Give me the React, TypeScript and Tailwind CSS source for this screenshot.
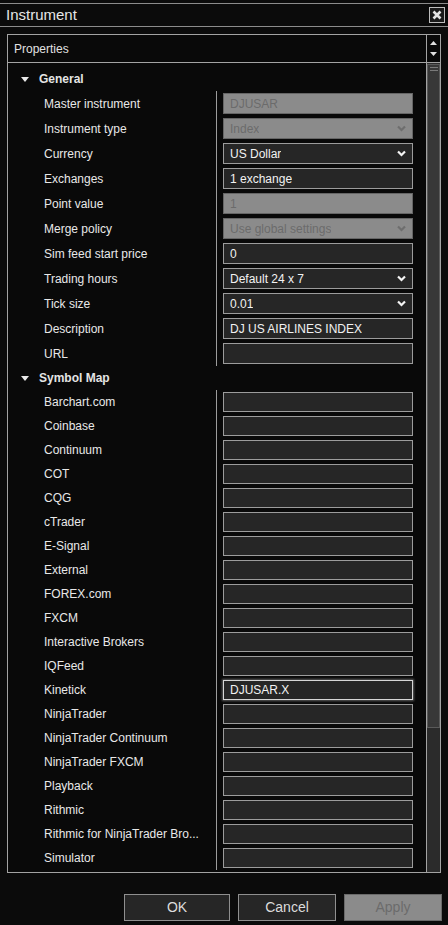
import React from 'react';

const general: { label: string; value: string; kind: 'text' | 'combo'; disabled?: boolean }[] = [
  { label: 'Master instrument', value: 'DJUSAR', kind: 'text', disabled: true },
  { label: 'Instrument type', value: 'Index', kind: 'combo', disabled: true },
  { label: 'Currency', value: 'US Dollar', kind: 'combo' },
  { label: 'Exchanges', value: '1 exchange', kind: 'text' },
  { label: 'Point value', value: '1', kind: 'text', disabled: true },
  { label: 'Merge policy', value: 'Use global settings', kind: 'combo', disabled: true },
  { label: 'Sim feed start price', value: '0', kind: 'text' },
  { label: 'Trading hours', value: 'Default 24 x 7', kind: 'combo' },
  { label: 'Tick size', value: '0.01', kind: 'combo' },
  { label: 'Description', value: 'DJ US AIRLINES INDEX', kind: 'text' },
  { label: 'URL', value: '', kind: 'text' },
];

const symbols = [
  'Barchart.com', 'Coinbase', 'Continuum', 'COT', 'CQG', 'cTrader', 'E-Signal', 'External',
  'FOREX.com', 'FXCM', 'Interactive Brokers', 'IQFeed', 'Kinetick', 'NinjaTrader',
  'NinjaTrader Continuum', 'NinjaTrader FXCM', 'Playback', 'Rithmic',
  'Rithmic for NinjaTrader Bro...', 'Simulator',
];

const font = { fontFamily: '"Liberation Sans", Arial, sans-serif' };

function Chevron({ dim }: { dim?: boolean }) {
  return (
    <svg width="9" height="7" viewBox="0 0 9 7" className="shrink-0">
      <polyline points="1,1.5 4.5,5 8,1.5" fill="none" stroke={dim ? '#6e6e6e' : '#f4f4f4'} strokeWidth="2.2" />
    </svg>
  );
}

function Field({ value, kind, disabled, focused, h }: { value: string; kind: 'text' | 'combo'; disabled?: boolean; focused?: boolean; h: string }) {
  const tone = disabled
    ? 'bg-[#8b8b8b] border-[#666] text-[#6b6b6b]'
    : focused
    ? 'bg-[#262626] border-[#d6d6d6] text-[#f2f2f2] shadow-[0_0_2px_1px_rgba(255,255,255,0.35)]'
    : 'bg-[#262626] border-[#9c9c9c] text-[#f2f2f2]';
  return (
    <div className={`${h} w-[190px] border flex items-center justify-between pl-[6px] pr-[6px] text-[12px] ${tone}`}>
      <span className="truncate">{value}</span>
      {kind === 'combo' && <Chevron dim={disabled} />}
    </div>
  );
}

function Category({ title }: { title: string }) {
  return (
    <div className="h-[24px] flex items-center pl-[13px] text-[12px] font-bold text-[#e4e4e4]">
      <svg width="8" height="5" viewBox="0 0 8 5" className="mr-[10px]">
        <polygon points="0,0 8,0 4,5" fill="#e8e8e8" />
      </svg>
      {title}
    </div>
  );
}

function Row({ label, children, h }: { label: string; children: React.ReactNode; h: string }) {
  return (
    <div className={`${h} flex items-stretch`}>
      <div className="w-[209px] shrink-0 border-r border-[#9c9c9c] pl-[36px] pr-[2px] flex items-center text-[12px] text-[#e8e8e8]">
        <span className="whitespace-nowrap">{label}</span>
      </div>
      <div className="flex-1 flex items-center pl-[6px]">{children}</div>
    </div>
  );
}

export default function App() {
  return (
    <div className="w-[448px] h-[925px] bg-[#0b0b0b] flex flex-col overflow-hidden select-none" style={font}>
      <div className="h-[3px]" />
      <div className="h-[24px] border-y border-[#8c8c8c] flex items-center justify-between pl-[6px] pr-[3px]">
        <span className="text-[15px] text-[#e6e6e6]">Instrument</span>
        <div className="w-[16px] h-[16px] border border-[#bdbdbd] bg-[#1a1a1a] flex items-center justify-center">
          <svg width="10" height="10" viewBox="0 0 10 10">
            <path d="M1.5 1.5 L8.5 8.5 M8.5 1.5 L1.5 8.5" stroke="#e4e4e4" strokeWidth="2.6" />
          </svg>
        </div>
      </div>

      <div className="mt-[7px] mx-[7px] h-[839px] border border-[#a3a3a3] flex flex-col bg-[#090909]">
        <div className="h-[28px] shrink-0 border-b border-[#a3a3a3] flex">
          <div className="flex-1 flex items-center pl-[6px] text-[12px] text-[#e2e2e2]">Properties</div>
          <div className="w-[14px] border-l border-[#a3a3a3] flex flex-col items-center justify-center gap-[7px]">
            <svg width="7" height="4" viewBox="0 0 7 4"><polygon points="0,4 7,4 3.5,0" fill="#e0e0e0" /></svg>
            <svg width="7" height="4" viewBox="0 0 7 4"><polygon points="0,0 7,0 3.5,4" fill="#e0e0e0" /></svg>
          </div>
        </div>
        <div className="flex-1 flex min-h-0">
          <div className="flex-1 overflow-hidden pt-[4px]">
            <Category title="General" />
            {general.map((r) => (
              <Row key={r.label} label={r.label} h="h-[25px]">
                <Field value={r.value} kind={r.kind} disabled={r.disabled} h="h-[21px]" />
              </Row>
            ))}
            <Category title="Symbol Map" />
            {symbols.map((s) => (
              <Row key={s} label={s} h="h-[24px]">
                <Field value={s === 'Kinetick' ? 'DJUSAR.X' : ''} kind="text" focused={s === 'Kinetick'} h="h-[20px]" />
              </Row>
            ))}
          </div>
          <div className="w-[14px] shrink-0 border-l border-[#a3a3a3] bg-[#2b2b2b] flex flex-col">
            <div className="h-[664px] mt-[1px] bg-[#383838] border border-[#5a5a5a] flex flex-col items-center pt-[2px] gap-[2px]">
              <div className="w-[8px] h-[1px] bg-[#7a7a7a]" />
              <div className="w-[8px] h-[1px] bg-[#7a7a7a]" />
            </div>
          </div>
        </div>
      </div>

      <div className="mt-[21px] flex justify-end gap-[8px] pr-[6px]">
        <button className="w-[106px] h-[27px] border border-[#8f8f8f] bg-[#262626] text-[14px] text-[#dcdcdc]">OK</button>
        <button className="w-[98px] h-[27px] border border-[#8f8f8f] bg-[#262626] text-[14px] text-[#dcdcdc]">Cancel</button>
        <button className="w-[98px] h-[27px] border border-[#6a6a6a] bg-[#8b8b8b] text-[14px] text-[#6b6b6b]">Apply</button>
      </div>
    </div>
  );
}
